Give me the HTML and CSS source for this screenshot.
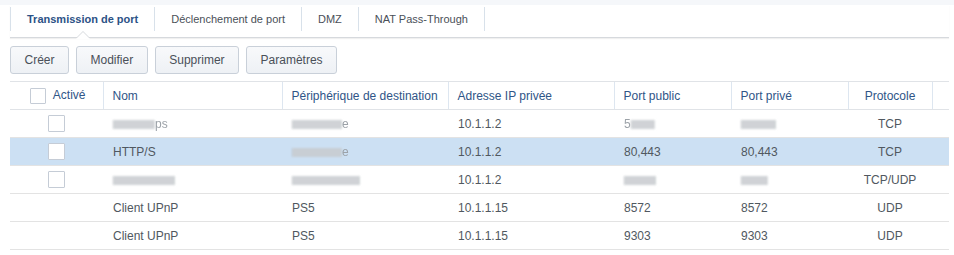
FILE: index.html
```html
<!DOCTYPE html>
<html lang="fr">
<head>
    <meta charset="UTF-8">
    <title>Transmission de port</title>
    <link rel="stylesheet" href="styles.css">
</head>
<body>
    <div class="top-strip"></div>
    <div class="page">
        <div class="tabs">
            <a class="tab active" href="#">Transmission de port</a>
            <a class="tab" href="#">Déclenchement de port</a>
            <a class="tab" href="#">DMZ</a>
            <a class="tab" href="#">NAT Pass-Through</a>
        </div>

        <div class="toolbar">
            <button>Créer</button>
            <button>Modifier</button>
            <button>Supprimer</button>
            <button>Paramètres</button>
        </div>

        <table class="grid">
            <colgroup>
                <col class="c-on">
                <col class="c-name">
                <col class="c-dev">
                <col class="c-ip">
                <col class="c-port">
                <col class="c-port">
                <col class="c-proto">
                <col>
            </colgroup>
            <thead>
                <tr>
                    <th class="col-on"><span class="check small"></span>Activé</th>
                    <th>Nom</th>
                    <th>Périphérique de destination</th>
                    <th>Adresse IP privée</th>
                    <th>Port public</th>
                    <th>Port privé</th>
                    <th class="center">Protocole</th>
                    <th></th>
                </tr>
            </thead>
            <tbody>
                <tr>
                    <td class="center"><span class="check"></span></td>
                    <td><span class="blur w42"></span><span class="fade">ps</span></td>
                    <td><span class="blur w50"></span><span class="fade">e</span></td>
                    <td>10.1.1.2</td>
                    <td><span class="fade">5</span><span class="blur w24"></span></td>
                    <td><span class="blur w35"></span></td>
                    <td class="center">TCP</td>
                    <td></td>
                </tr>
                <tr class="selected">
                    <td class="center"><span class="check"></span></td>
                    <td>HTTP/S</td>
                    <td><span class="blur w50"></span><span class="fade">e</span></td>
                    <td>10.1.1.2</td>
                    <td>80,443</td>
                    <td>80,443</td>
                    <td class="center">TCP</td>
                    <td></td>
                </tr>
                <tr>
                    <td class="center"><span class="check"></span></td>
                    <td><span class="blur w62"></span></td>
                    <td><span class="blur w68"></span></td>
                    <td>10.1.1.2</td>
                    <td><span class="blur w32"></span></td>
                    <td><span class="blur w27"></span></td>
                    <td class="center">TCP/UDP</td>
                    <td></td>
                </tr>
                <tr>
                    <td></td>
                    <td>Client UPnP</td>
                    <td>PS5</td>
                    <td>10.1.1.15</td>
                    <td>8572</td>
                    <td>8572</td>
                    <td class="center">UDP</td>
                    <td></td>
                </tr>
                <tr>
                    <td></td>
                    <td>Client UPnP</td>
                    <td>PS5</td>
                    <td>10.1.1.15</td>
                    <td>9303</td>
                    <td>9303</td>
                    <td class="center">UDP</td>
                    <td></td>
                </tr>
            </tbody>
        </table>
    </div>
</body>
</html>
```

FILE: styles.css
```css
body {
    margin: 0;
    padding: 0;
    background: #fff;
    font-family: "Liberation Sans", Arial, sans-serif;
    font-size: 12px;
    color: #505860;
}
.top-strip {
    height: 5px;
    background: #f5f7fa;
}
.page {
    padding: 0 5px 0 10px;
}

/* onglets */
.tabs {
    display: flex;
    height: 32px;
    border-bottom: 1px solid #d6d9dd;
    box-shadow: 0 1px 1px rgba(0, 0, 0, 0.06);
}
.tab {
    display: flex;
    align-items: center;
    padding: 0 16px;
    height: 24px;
    margin-top: 2px;
    border-left: 1px solid #d8e1ea;
    font-size: 11px;
    color: #4a5058;
    text-decoration: none;
}
.tab:last-child {
    border-right: 1px solid #d8e1ea;
}
.tab.active {
    color: #2c5286;
    font-weight: bold;
    position: relative;
}
/* petite flèche sous l'onglet actif */
.tab.active::before,
.tab.active::after {
    content: "";
    position: absolute;
    left: 50%;
    margin-left: -7px;
    width: 0;
    height: 0;
    border-left: 7px solid transparent;
    border-right: 7px solid transparent;
}
.tab.active::before {
    bottom: -7px;
    border-bottom: 7px solid #d6d9dd;
}
.tab.active::after {
    bottom: -8px;
    border-bottom: 7px solid #fff;
}

/* boutons */
.toolbar {
    display: flex;
    gap: 7px;
    margin-top: 8px;
}
.toolbar button {
    height: 28px;
    padding: 0 13.5px;
    font-family: inherit;
    font-size: 12px;
    color: #4a5058;
    background: linear-gradient(#f8f9fb, #eef1f5);
    border: 1px solid #c9d0d9;
    border-radius: 3px;
}

/* tableau */
.grid {
    width: 939px;
    margin-top: 7px;
    border-collapse: collapse;
    table-layout: fixed;
}
.c-on { width: 93px; }
.c-name { width: 179px; }
.c-dev { width: 166px; }
.c-ip { width: 166px; }
.c-port { width: 117px; }
.c-proto { width: 84px; }

.grid th {
    height: 27px;
    padding: 0 9px;
    text-align: left;
    font-weight: normal;
    color: #2f5587;
    border-top: 1px solid #e0e3e7;
    border-bottom: 1px solid #e0e3e7;
    border-left: 1px solid #dde6f0;
}
.grid th:first-child {
    border-left: none;
}
.grid th.col-on {
    text-align: right;
    padding-right: 17px;
}
.grid td {
    height: 27px;
    padding: 0 10px;
    border-bottom: 1px solid #e3e3e3;
    white-space: nowrap;
    overflow: hidden;
}
.grid .center {
    text-align: center;
}
.grid tr.selected td {
    background: #cce0f3;
}

.check {
    display: inline-block;
    width: 15px;
    height: 15px;
    border: 1px solid #c5ccd6;
    border-radius: 1px;
    background: #fff;
    vertical-align: middle;
}
.check.small {
    width: 14px;
    height: 14px;
    float: left;
    margin-left: 11px;
}

/* données masquées */
.blur {
    display: inline-block;
    height: 9px;
    background: repeating-linear-gradient(90deg, #b4b8bd 0 1px, #d2d5d8 1px 3px);
    filter: blur(0.9px);
    opacity: 0.85;
    vertical-align: middle;
}
.fade {
    color: #9ca2a8;
    filter: blur(0.4px);
}
.w24 { width: 24px; }
.w27 { width: 27px; }
.w32 { width: 32px; }
.w35 { width: 35px; }
.w42 { width: 42px; }
.w50 { width: 50px; }
.w62 { width: 62px; }
.w68 { width: 68px; }
```
